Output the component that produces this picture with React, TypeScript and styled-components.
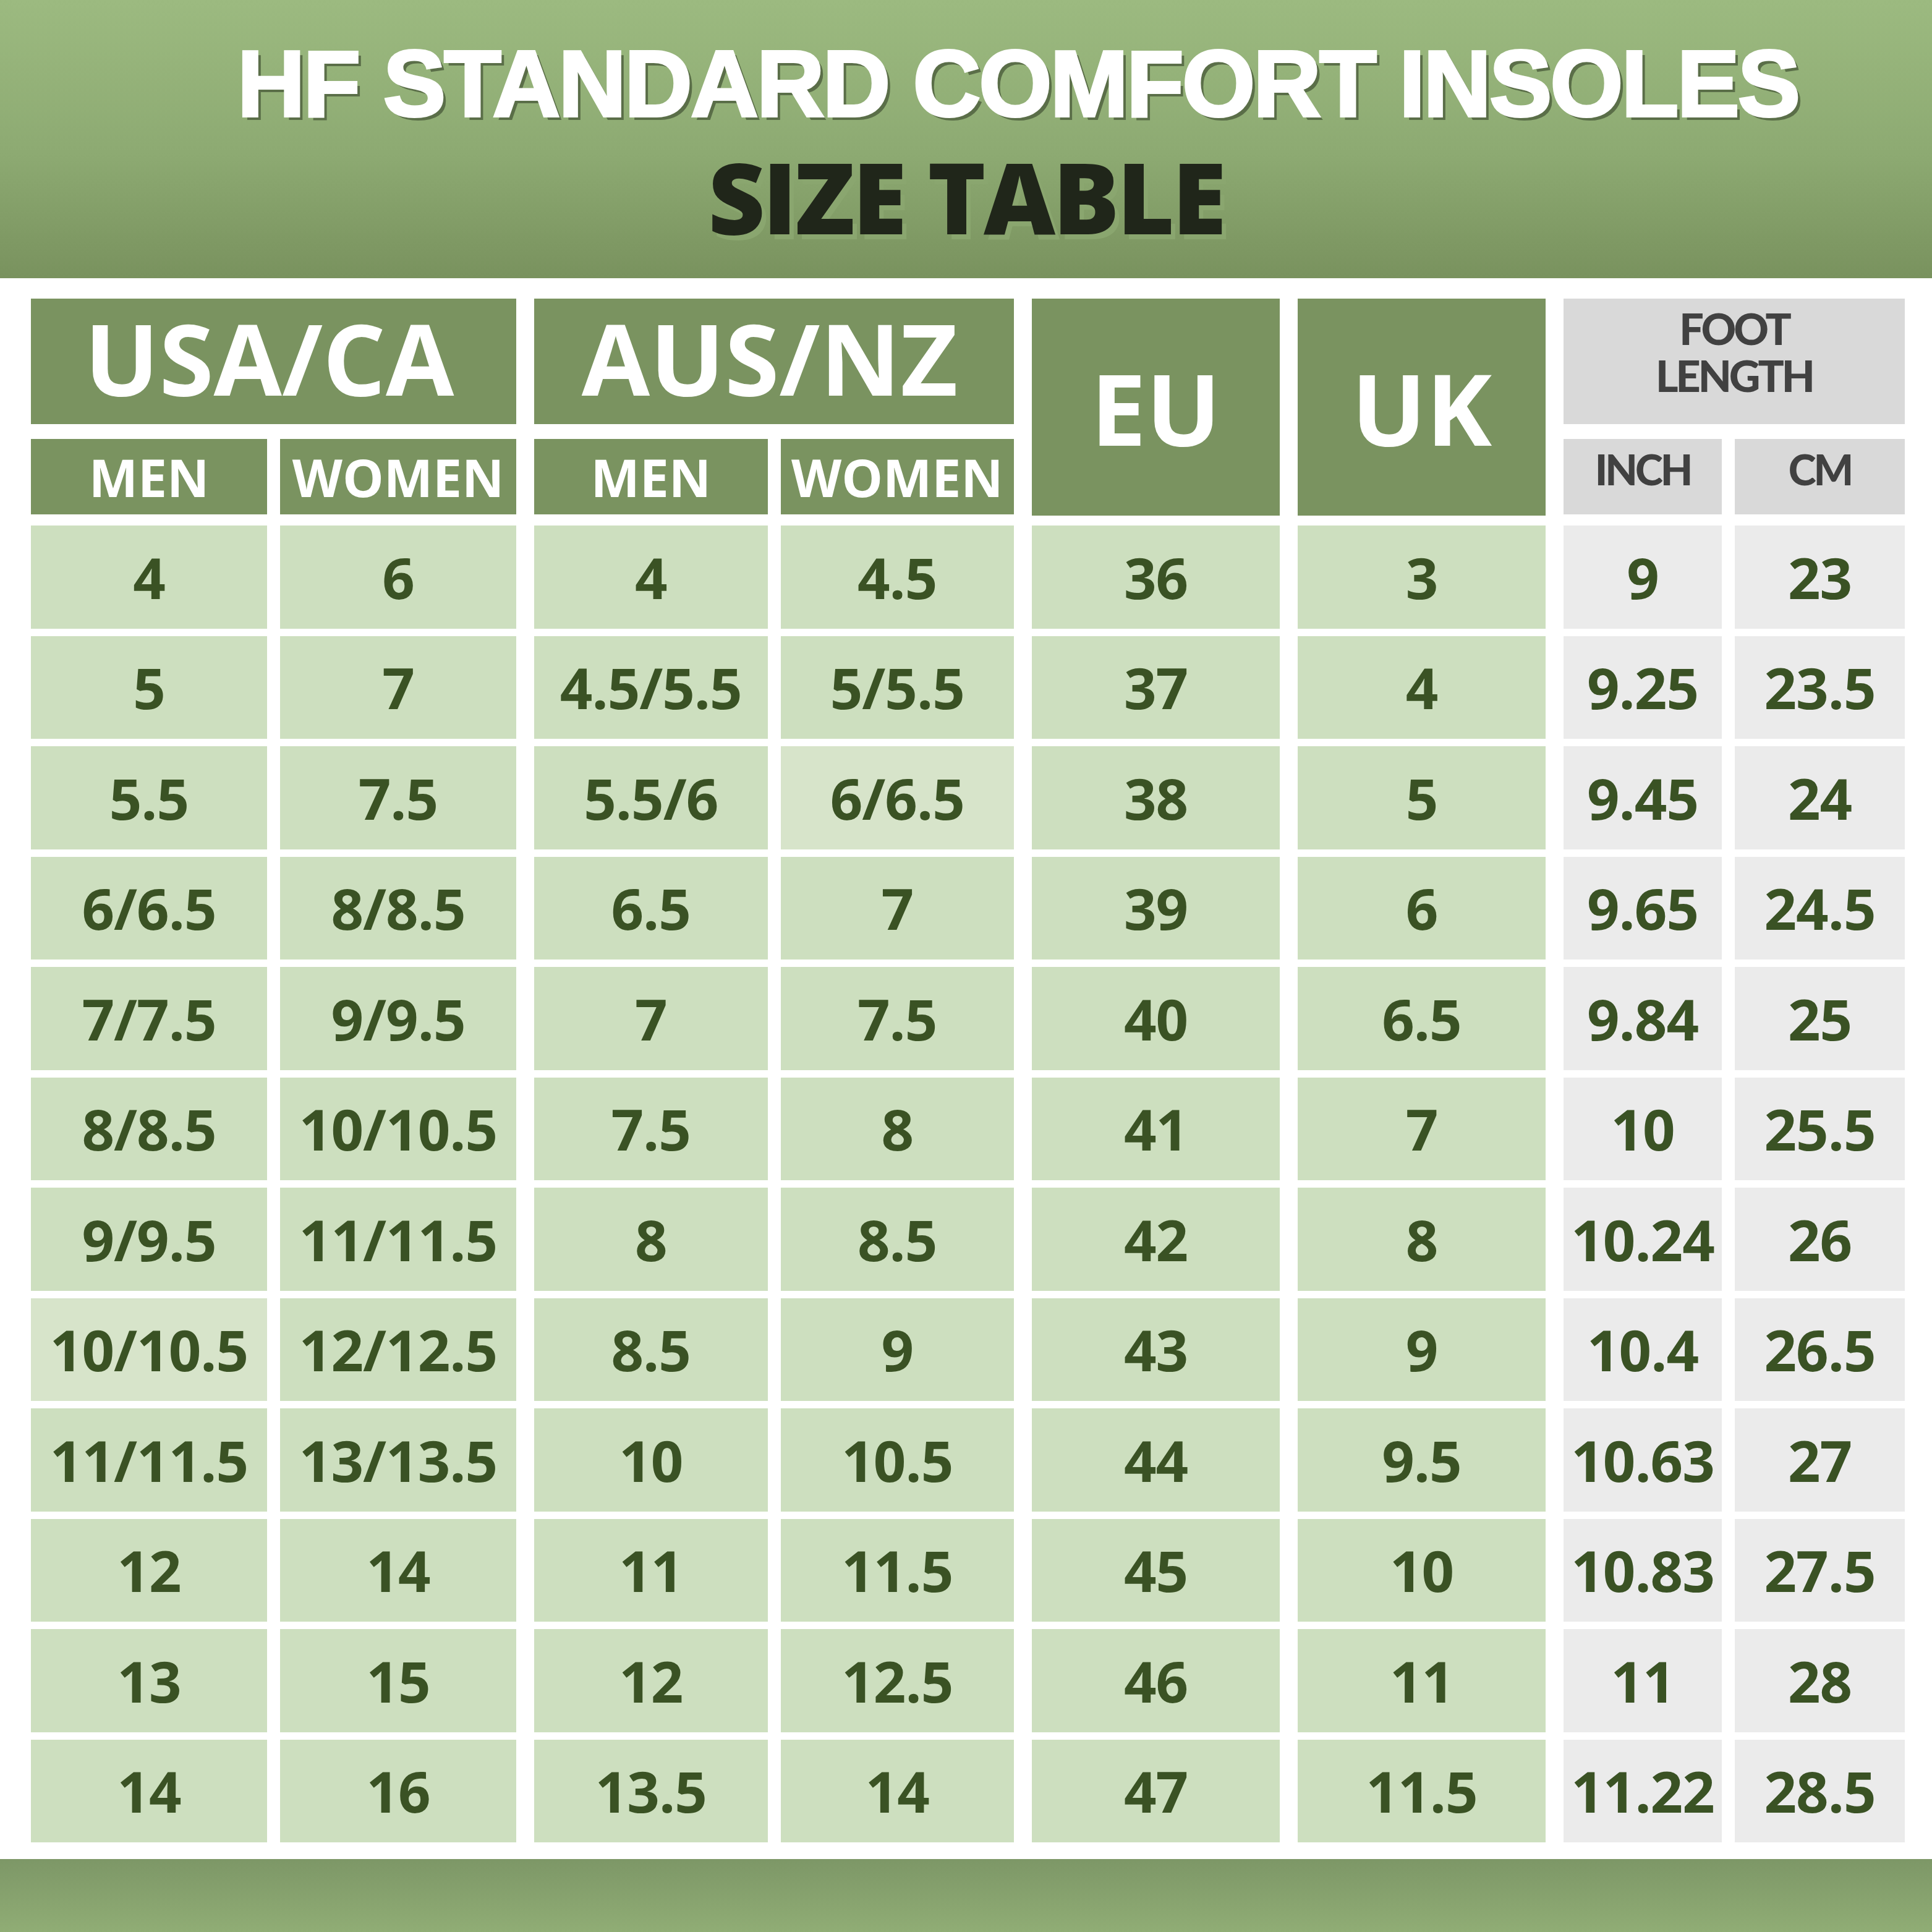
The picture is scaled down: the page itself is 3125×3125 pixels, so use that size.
import React from 'react';
import styled, { createGlobalStyle } from 'styled-components';

const GlobalStyle = createGlobalStyle`
  html, body { margin: 0; padding: 0; background: #ffffff; }
  * { box-sizing: border-box; }
`;

const Page = styled.div`
  width: 3125px;
  height: 3125px;
  display: flex;
  flex-direction: column;
  background: #ffffff;
  overflow: hidden;
`;

const Header = styled.header`
  height: 450px;
  flex-shrink: 0;
  background: linear-gradient(180deg, #9cba80 0%, #8daa72 55%, #79925e 100%);
  display: flex;
  flex-direction: column;
  align-items: center;
  padding-top: 50px;
`;

const Title = styled.h1`
  margin: 0 0 0 168px;
  font-family: "Liberation Sans", Arial, sans-serif;
  font-weight: 700;
  font-size: 152px;
  line-height: 170px;
  letter-spacing: -3px;
  color: #ffffff;
  -webkit-text-stroke: 4px #ffffff;
  text-shadow: 6px 6px 0 #5a6e48;
  white-space: nowrap;
`;

const Subtitle = styled.h2`
  margin: 12px 0 0;
  font-family: "Open Sans", "Noto Sans", sans-serif;
  font-weight: 800;
  font-size: 160px;
  line-height: 170px;
  letter-spacing: -4px;
  color: #20261a;
  text-shadow: 7px 8px 0 #8aa66f;
  white-space: nowrap;
`;

const Board = styled.main`
  flex: 1;
  display: flex;
  gap: 29px;
  padding: 33px 0 0 50px;
`;

const Group = styled.section<{ $w: number }>`
  width: ${(p) => p.$w}px;
  display: flex;
  flex-direction: column;
`;

const HeadArea = styled.div`
  height: 351px;
  display: flex;
  flex-direction: column;
  gap: 24px;
  margin-bottom: 16px;
`;

const GroupTitle = styled.div<{ $grey?: boolean }>`
  height: 203px;
  display: flex;
  flex-direction: column;
  align-items: center;
  justify-content: center;
  background: ${(p) => (p.$grey ? '#d9d9d9' : '#7a9360')};
  color: ${(p) => (p.$grey ? '#414141' : '#ffffff')};
  font-family: ${(p) =>
    p.$grey ? 'Lato, "Liberation Sans", sans-serif' : '"Open Sans", "Noto Sans", sans-serif'};
  font-weight: ${(p) => (p.$grey ? 900 : 700)};
  font-size: ${(p) => (p.$grey ? '70px' : '160px')};
  letter-spacing: ${(p) => (p.$grey ? '-4px' : '0')};
  line-height: ${(p) => (p.$grey ? '76px' : '1')};
  padding-bottom: ${(p) => (p.$grey ? '32px' : '14px')};
  padding-right: ${(p) => (p.$grey ? '0' : '14px')};
`;

const TallHead = styled.div`
  flex: 1;
  display: flex;
  align-items: center;
  justify-content: center;
  background: #7a9360;
  color: #ffffff;
  font-family: "Open Sans", "Noto Sans", sans-serif;
  font-weight: 700;
  font-size: 160px;
  line-height: 1;
`;

const Pair = styled.div<{ $cols: string }>`
  display: grid;
  grid-template-columns: ${(p) => p.$cols};
  column-gap: 21px;
`;

const SubHead = styled.div<{ $grey?: boolean }>`
  height: 122px;
  display: flex;
  align-items: center;
  justify-content: center;
  background: ${(p) => (p.$grey ? '#d9d9d9' : '#7a9360')};
  color: ${(p) => (p.$grey ? '#414141' : '#ffffff')};
  font-family: ${(p) =>
    p.$grey ? 'Lato, "Liberation Sans", sans-serif' : '"Open Sans", "Noto Sans", sans-serif'};
  font-weight: ${(p) => (p.$grey ? 900 : 700)};
  font-size: ${(p) => (p.$grey ? '68px' : '84px')};
  letter-spacing: ${(p) => (p.$grey ? '-4px' : '0')};
  padding-bottom: ${(p) => (p.$grey ? '26px' : '0')};
`;

const Rows = styled.div`
  display: flex;
  flex-direction: column;
  gap: 12px;
`;

type Tone = 'green' | 'pale' | 'grey';

const toneBg: Record<Tone, string> = {
  green: '#cddfbf',
  pale: '#d7e4ca',
  grey: '#ebebeb',
};

const Cell = styled.div<{ $tone: Tone }>`
  height: 166.5px;
  display: flex;
  align-items: center;
  justify-content: center;
  background: ${(p) => toneBg[p.$tone]};
  color: #3a5224;
  font-family: "Open Sans", "Noto Sans", sans-serif;
  font-weight: 700;
  font-size: 92px;
  letter-spacing: -1px;
  white-space: nowrap;
`;

const Footer = styled.footer`
  height: 118px;
  flex-shrink: 0;
  background: linear-gradient(180deg, #7d9767 0%, #90ad75 100%);
`;

const USA_MEN = ['4', '5', '5.5', '6/6.5', '7/7.5', '8/8.5', '9/9.5', '10/10.5', '11/11.5', '12', '13', '14'];
const USA_WOMEN = ['6', '7', '7.5', '8/8.5', '9/9.5', '10/10.5', '11/11.5', '12/12.5', '13/13.5', '14', '15', '16'];
const AUS_MEN = ['4', '4.5/5.5', '5.5/6', '6.5', '7', '7.5', '8', '8.5', '10', '11', '12', '13.5'];
const AUS_WOMEN = ['4.5', '5/5.5', '6/6.5', '7', '7.5', '8', '8.5', '9', '10.5', '11.5', '12.5', '14'];
const EU = ['36', '37', '38', '39', '40', '41', '42', '43', '44', '45', '46', '47'];
const UK = ['3', '4', '5', '6', '6.5', '7', '8', '9', '9.5', '10', '11', '11.5'];
const INCH = ['9', '9.25', '9.45', '9.65', '9.84', '10', '10.24', '10.4', '10.63', '10.83', '11', '11.22'];
const CM = ['23', '23.5', '24', '24.5', '25', '25.5', '26', '26.5', '27', '27.5', '28', '28.5'];

// a couple of cells in the original are a shade lighter
const PALE = new Set(['usa-men-7', 'aus-women-2']);

function PairGroup(props: {
  id: string;
  w: number;
  cols: string;
  title: React.ReactNode;
  subs: [string, string];
  left: string[];
  right: string[];
  grey?: boolean;
}) {
  const { id, w, cols, title, subs, left, right, grey } = props;
  const tone = (side: string, i: number): Tone =>
    grey ? 'grey' : PALE.has(`${id}-${side}-${i}`) ? 'pale' : 'green';
  return (
    <Group $w={w}>
      <HeadArea>
        <GroupTitle $grey={grey}>{title}</GroupTitle>
        <Pair $cols={cols}>
          <SubHead $grey={grey}>{subs[0]}</SubHead>
          <SubHead $grey={grey}>{subs[1]}</SubHead>
        </Pair>
      </HeadArea>
      <Rows>
        {left.map((v, i) => (
          <Pair key={i} $cols={cols}>
            <Cell $tone={tone('men', i)}>{v}</Cell>
            <Cell $tone={tone('women', i)}>{right[i]}</Cell>
          </Pair>
        ))}
      </Rows>
    </Group>
  );
}

function SingleGroup({ title, values }: { title: string; values: string[] }) {
  return (
    <Group $w={401}>
      <HeadArea>
        <TallHead>{title}</TallHead>
      </HeadArea>
      <Rows>
        {values.map((v) => (
          <Cell key={v} $tone="green">{v}</Cell>
        ))}
      </Rows>
    </Group>
  );
}

export default function App() {
  return (
    <>
      <GlobalStyle />
      <Page>
        <Header>
          <Title>HF STANDARD COMFORT INSOLES</Title>
          <Subtitle>SIZE TABLE</Subtitle>
        </Header>
        <Board>
          <PairGroup id="usa" w={785} cols="1fr 1fr" title="USA/CA" subs={['MEN', 'WOMEN']} left={USA_MEN} right={USA_WOMEN} />
          <PairGroup id="aus" w={776} cols="1fr 1fr" title="AUS/NZ" subs={['MEN', 'WOMEN']} left={AUS_MEN} right={AUS_WOMEN} />
          <SingleGroup title="EU" values={EU} />
          <SingleGroup title="UK" values={UK} />
          <PairGroup
            id="foot"
            w={552}
            cols="256px 1fr"
            grey
            title={
              <>
                <span>FOOT</span>
                <span>LENGTH</span>
              </>
            }
            subs={['INCH', 'CM']}
            left={INCH}
            right={CM}
          />
        </Board>
        <Footer />
      </Page>
    </>
  );
}
